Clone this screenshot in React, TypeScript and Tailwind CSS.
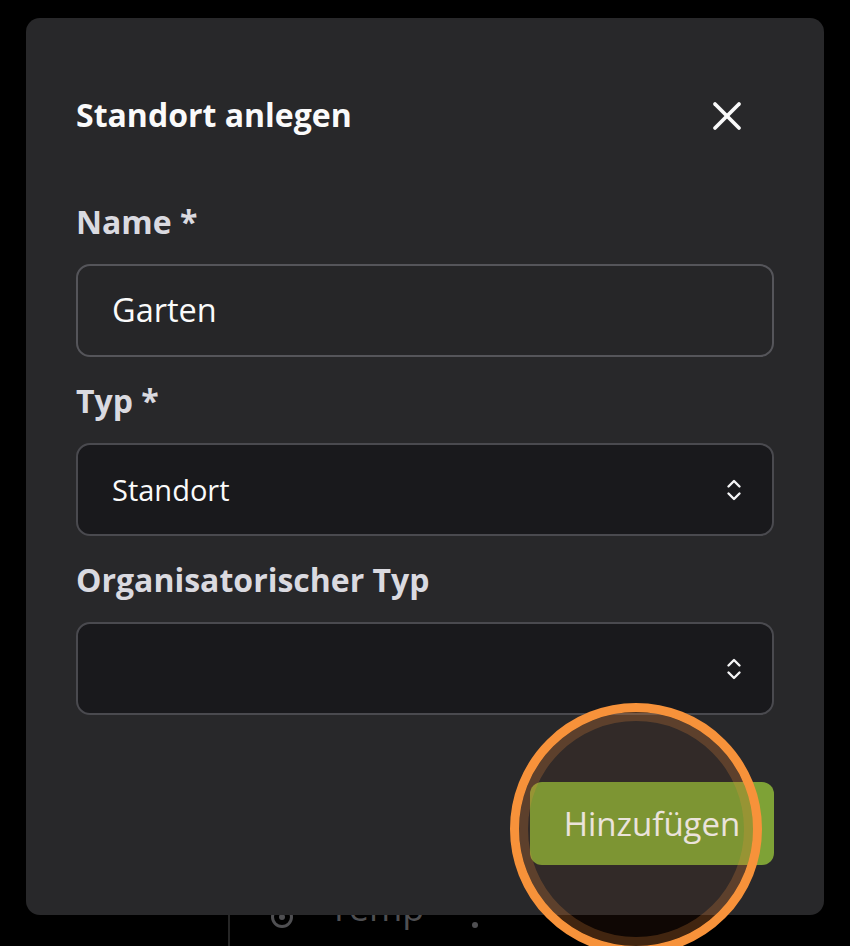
import React from "react";

const FONT = { fontFamily: '"Open Sans", "Noto Sans", sans-serif' };

function CloseIcon() {
  return (
    <svg width="30" height="30" viewBox="0 0 30 30" fill="none" stroke="#fafafa" strokeWidth="3.8" strokeLinecap="round">
      <path d="M3 3L27 27" />
      <path d="M27 3L3 27" />
    </svg>
  );
}

function Chevrons() {
  return (
    <svg width="16" height="24" viewBox="0 0 16 24" fill="none" stroke="#f4f4f5" strokeWidth="2.4" strokeLinecap="round" strokeLinejoin="round">
      <path d="M2.5 8.5L8 3L13.5 8.5" />
      <path d="M2.5 15.5L8 21L13.5 15.5" />
    </svg>
  );
}

function Label({ children, first }: { children: React.ReactNode; first?: boolean }) {
  return (
    <label
      className={`block text-[32px] font-bold leading-[40px] text-[#dadae0] ${first ? "mt-[67px]" : "mt-[24px]"} mb-[22px]`}
    >
      {children}
    </label>
  );
}

function SelectBox({ value }: { value?: string }) {
  return (
    <div className="flex h-[93px] items-center justify-between rounded-[14px] border-2 border-[#4a4a4f] bg-[#19191c] pl-[34px] pr-[30px]">
      <span className="text-[29px] text-[#fafafa]">{value ?? ""}</span>
      <Chevrons />
    </div>
  );
}

export default function App() {
  return (
    <div className="relative flex h-[946px] w-[850px] flex-col overflow-hidden bg-black" style={FONT}>
      {/* page behind the dialog */}
      <div className="h-[880px] bg-black" />
      <div className="flex flex-1">
        <aside className="w-[230px] border-r-2 border-[#262626] bg-black" />
        <main className="flex flex-1 items-start bg-black pl-[41px] text-[#4f4f52]">
          <span className="mt-[26px] flex h-[22px] w-[22px] items-center justify-center rounded-full border-[3px] border-[#4f4f52]">
            <span className="h-[6px] w-[6px] rounded-full bg-[#4f4f52]" />
          </span>
          <span className="ml-[36px] mt-[8px] text-[36px] leading-[40px]">Temp</span>
          <span className="ml-[48px] mt-[42px] h-[6px] w-[6px] rounded-full bg-[#4f4f52]" />
        </main>
      </div>

      {/* dialog */}
      <div className="absolute left-[26px] top-[18px] h-[897px] w-[798px] rounded-[14px] bg-[#28282a] px-[50px] pt-[77px]">
        <div className="flex h-[40px] items-center justify-between">
          <h2 className="text-[32px] font-bold leading-[40px] text-[#fafafa]">Standort anlegen</h2>
          <button className="mr-[32px] mt-[2px] flex items-center">
            <CloseIcon />
          </button>
        </div>

        <Label first>Name *</Label>
        <div className="flex h-[93px] items-center rounded-[14px] border-2 border-[#55555a] bg-[#262628] pl-[34px]">
          <span className="text-[32.5px] text-[#fafafa]">Garten</span>
        </div>

        <Label>Typ *</Label>
        <SelectBox value="Standort" />

        <Label>Organisatorischer Typ</Label>
        <SelectBox />

        <div className="mt-[67px] flex justify-end">
          <button className="flex h-[83px] w-[244px] items-center justify-center rounded-[12px] bg-[#7ea236] text-[33px] text-[#fbfbf5]">
            Hinzufügen
          </button>
        </div>
      </div>

      {/* highlight ring */}
      <div className="pointer-events-none absolute left-[510px] top-[703px] h-[252px] w-[252px] rounded-full border-[9px] border-[#f7923a] bg-[rgba(120,60,30,0.12)] shadow-[inset_0_0_0_9px_rgba(247,146,58,0.22)]" />
    </div>
  );
}
